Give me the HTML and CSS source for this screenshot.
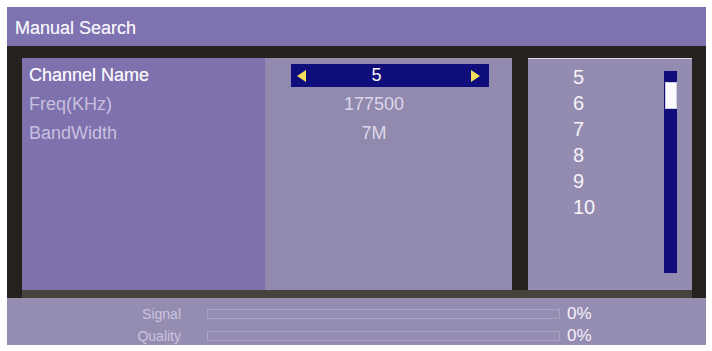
FILE: index.html
```html
<!DOCTYPE html>
<html>
<head>
<meta charset="utf-8">
<link rel="stylesheet" href="styles.css">
</head>
<body>
<div class="frame">
  <div class="header">Manual Search</div>
  <div class="main">
    <div class="panels">
      <div class="labels">
        <div class="row label-active">Channel Name</div>
        <div class="row label">Freq(KHz)</div>
        <div class="row label">BandWidth</div>
      </div>
      <div class="values">
        <div class="selector">
          <span class="arrow arrow-left"></span>
          <span class="sel-value">5</span>
          <span class="arrow arrow-right"></span>
        </div>
        <div class="row value">177500</div>
        <div class="row value">7M</div>
      </div>
      <div class="gap"></div>
      <div class="list">
        <div class="items">
          <div class="item">5</div>
          <div class="item">6</div>
          <div class="item">7</div>
          <div class="item">8</div>
          <div class="item">9</div>
          <div class="item">10</div>
        </div>
        <div class="scrollbar"><div class="thumb"></div></div>
      </div>
    </div>
    <div class="band"></div>
  </div>
  <div class="status">
    <div class="srow">
      <div class="slabel">Signal</div>
      <div class="bar"></div>
      <div class="pct">0%</div>
    </div>
    <div class="srow">
      <div class="slabel">Quality</div>
      <div class="bar bar-q"></div>
      <div class="pct">0%</div>
    </div>
  </div>
</div>
</body>
</html>
```
FILE: styles.css
```css
html, body {
  margin: 0;
  padding: 0;
  background: #ffffff;
}
body {
  font-family: "Liberation Sans", Arial, sans-serif;
}
.frame {
  margin: 7px 0 0 7px;
  width: 699px;
  display: flex;
  flex-direction: column;
}
.header {
  height: 35px;
  padding: 4px 0 0 8px;
  line-height: 35px;
  background: #7f72b1;
  color: #f1eff7;
  font-size: 18px;
  text-shadow: 0 0 0.4px #f1eff7;
}
.main {
  background: #26211e;
  padding: 12px 14px 0 15px;
  display: flex;
  flex-direction: column;
}
.panels {
  display: flex;
  height: 232px;
}
.labels {
  width: 236px;
  padding: 3px 0 0 7px;
  background: #7e71ad;
}
.row {
  height: 29px;
  line-height: 29px;
  font-size: 18px;
  white-space: nowrap;
}
.label-active {
  color: #f4f2fa;
  text-shadow: 0 0 0.5px #f4f2fa;
}
.label {
  color: #c8c0df;
}
.values {
  width: 221px;
  padding: 6px 0 0 26px;
  background: #9189ae;
}
.selector {
  width: 198px;
  height: 23px;
  margin-bottom: 3px;
  background: #0f0e7a;
  display: flex;
  align-items: center;
  padding: 0 9px 0 6px;
  box-sizing: border-box;
}
.sel-value {
  flex: 1;
  text-align: center;
  padding-right: 24px;
  color: #f6f5fb;
  font-size: 18px;
  line-height: 23px;
}
.arrow {
  width: 0;
  height: 0;
  border-top: 6px solid transparent;
  border-bottom: 6px solid transparent;
}
.arrow-left {
  border-right: 9px solid #f3df5c;
}
.arrow-right {
  border-left: 9px solid #f3df5c;
}
.value {
  width: 166px;
  text-align: center;
  color: #dcd7e9;
}
.gap {
  width: 16px;
}
.list {
  width: 164px;
  background: #948bb0;
  border-top: 1px solid #dcd8e6;
  box-sizing: border-box;
  display: flex;
  justify-content: space-between;
}
.items {
  padding: 5px 0 0 45px;
}
.item {
  height: 26px;
  line-height: 26px;
  font-size: 20px;
  color: #f5f3fa;
}
.scrollbar {
  width: 13px;
  height: 202px;
  margin: 12px 15px 0 0;
  background: #110c7a;
  padding-top: 12px;
  box-sizing: border-box;
  display: flex;
  justify-content: center;
}
.thumb {
  width: 10px;
  height: 25px;
  background: #fbfbfd;
  box-shadow: 0 0 0 1px #cfcde0;
}
.band {
  height: 8px;
  background: #47423c;
}
.status {
  height: 42px;
  padding-top: 5px;
  background: #958cb1;
}
.srow {
  height: 22px;
  display: flex;
  align-items: center;
}
.slabel {
  width: 174px;
  text-align: right;
  font-size: 14px;
  color: #cbc4df;
}
.bar {
  width: 353px;
  height: 10px;
  margin-left: 26px;
  box-sizing: border-box;
  border: 1px solid #aaa2c4;
  background: #958db2;
}
.bar-q {
  border-bottom-color: #b29fc9;
}
.pct {
  margin-left: 7px;
  font-size: 17px;
  color: #f5f3fa;
}
```
